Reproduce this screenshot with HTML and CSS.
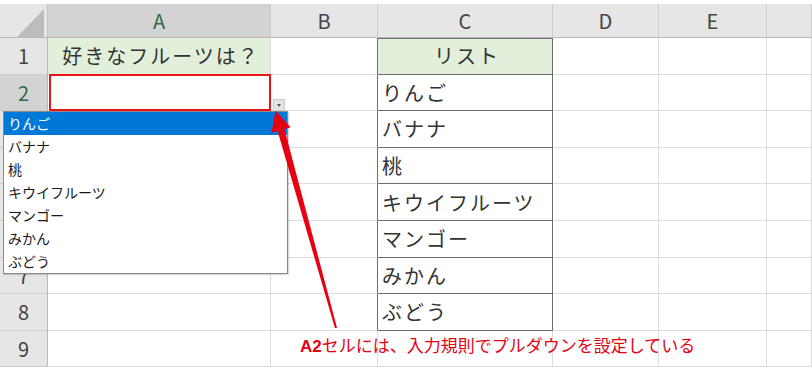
FILE: index.html
```html
<!DOCTYPE html>
<html lang="ja">
<head>
    <meta charset="UTF-8">
    <title>入力規則 プルダウン</title>
    <link rel="stylesheet" href="styles.css">
</head>
<body>
    <div class="sheet">
        <!-- header row -->
        <div class="corner"></div>
        <div class="col-head selected">A</div>
        <div class="col-head">B</div>
        <div class="col-head">C</div>
        <div class="col-head">D</div>
        <div class="col-head">E</div>
        <div class="col-head"></div>

        <div class="row-head">1</div>
        <div class="cell green center">好きなフルーツは？</div>
        <div class="cell before-list"></div>
        <div class="cell list green center first">リスト</div>
        <div class="cell"></div><div class="cell"></div><div class="cell"></div>

        <div class="row-head selected">2</div>
        <div class="cell active"></div>
        <div class="cell before-list"></div>
        <div class="cell list">りんご</div>
        <div class="cell"></div><div class="cell"></div><div class="cell"></div>

        <div class="row-head">3</div>
        <div class="cell"></div>
        <div class="cell before-list"></div>
        <div class="cell list">バナナ</div>
        <div class="cell"></div><div class="cell"></div><div class="cell"></div>

        <div class="row-head">4</div>
        <div class="cell"></div>
        <div class="cell before-list"></div>
        <div class="cell list">桃</div>
        <div class="cell"></div><div class="cell"></div><div class="cell"></div>

        <div class="row-head">5</div>
        <div class="cell"></div>
        <div class="cell before-list"></div>
        <div class="cell list">キウイフルーツ</div>
        <div class="cell"></div><div class="cell"></div><div class="cell"></div>

        <div class="row-head">6</div>
        <div class="cell"></div>
        <div class="cell before-list"></div>
        <div class="cell list">マンゴー</div>
        <div class="cell"></div><div class="cell"></div><div class="cell"></div>

        <div class="row-head">7</div>
        <div class="cell"></div>
        <div class="cell before-list"></div>
        <div class="cell list">みかん</div>
        <div class="cell"></div><div class="cell"></div><div class="cell"></div>

        <div class="row-head">8</div>
        <div class="cell"></div>
        <div class="cell before-list"></div>
        <div class="cell list">ぶどう</div>
        <div class="cell"></div><div class="cell"></div><div class="cell"></div>

        <div class="row-head">9</div>
        <div class="cell"></div>
        <div class="cell"></div>
        <div class="cell"></div>
        <div class="cell"></div><div class="cell"></div><div class="cell"></div>

        <!-- dropdown on A2 -->
        <div class="drop-button"></div>
        <ul class="dropdown">
            <li class="picked">りんご</li>
            <li>バナナ</li>
            <li>桃</li>
            <li>キウイフルーツ</li>
            <li>マンゴー</li>
            <li>みかん</li>
            <li>ぶどう</li>
        </ul>

        <!-- callout -->
        <svg class="arrow" width="812" height="364" viewBox="0 4 812 364">
            <polygon points="284.4,129.1 277.6,130.9 335,328.3 337,327.7" fill="#e60012"/>
            <polygon points="275.6,110.7 290.6,127.3 271.4,132.7" fill="#e60012"/>
        </svg>
        <div class="note"><b>A2</b>セルには、入力規則でプルダウンを設定している</div>
    </div>
</body>
</html>
```

FILE: styles.css
```css
* {
    margin: 0;
    padding: 0;
    box-sizing: border-box;
}

body {
    background-color: #fff;
    font-family: "Noto Sans CJK JP", "Noto Sans", sans-serif;
    color: #262626;
    overflow: hidden;
}

.sheet {
    position: relative;
    margin-top: 4px;
    display: grid;
    grid-template-columns: 48px 223px 107px 175px 106px 108px 45px;
    grid-template-rows: 34px repeat(9, 36.6px);
}

.corner {
    position: relative;
    background-color: #e6e6e6;
    border-right: 1px solid #c4c4c4;
    border-bottom: 1px solid #b8b8b8;
}

.corner::after {
    content: "";
    position: absolute;
    left: 17px;
    top: 5px;
    width: 27px;
    height: 28px;
    background-color: #bdbdbd;
    clip-path: polygon(100% 0, 100% 100%, 0 100%);
}

.col-head {
    background-color: #e6e6e6;
    border-right: 1px solid #cdcdcd;
    border-bottom: 1px solid #b8b8b8;
    display: flex;
    justify-content: center;
    align-items: center;
    font-size: 20px;
    color: #444;
}

.row-head {
    background-color: #e6e6e6;
    border-right: 1px solid #b8b8b8;
    border-bottom: 1px solid #cdcdcd;
    display: flex;
    justify-content: center;
    align-items: center;
    font-size: 20px;
    color: #444;
}

.col-head.selected,
.row-head.selected {
    background-color: #d3d3d3;
    color: #2f6b47;
}

.cell {
    border-right: 1px solid #dcdcdc;
    border-bottom: 1px solid #dcdcdc;
    display: flex;
    align-items: center;
    padding-left: 4px;
    font-size: 20px;
    letter-spacing: 2px;
    color: #333;
    white-space: nowrap;
}

.cell.center {
    justify-content: center;
}

.cell.green {
    background-color: #e2efda;
}

.cell.before-list {
    border-right-color: #6e6e6e;
}

.cell.list {
    border-right-color: #6e6e6e;
    border-bottom-color: #6e6e6e;
}

.cell.list.first {
    box-shadow: inset 0 1px 0 #6e6e6e;
}

.cell.active {
    border: 2px solid #e8141a;
    margin-left: 1px;
    margin-top: -1px;
}

.drop-button {
    position: absolute;
    left: 273px;
    top: 95px;
    width: 12px;
    height: 12px;
    background-color: #e4e4e4;
    border: 1px solid #cbcbcb;
}

.drop-button::after {
    content: "";
    position: absolute;
    left: 3px;
    top: 4px;
    border-left: 2.5px solid transparent;
    border-right: 2.5px solid transparent;
    border-top: 3px solid #555;
}

.dropdown {
    position: absolute;
    left: 3px;
    top: 107px;
    width: 285px;
    list-style: none;
    background-color: #fff;
    border: 1px solid #8a8a8a;
    box-shadow: 1px 1px 1px rgba(0, 0, 0, 0.15);
}

.dropdown li {
    height: 23px;
    line-height: 23px;
    padding-left: 4px;
    font-size: 14px;
    color: #1a1a1a;
}

.dropdown li.picked {
    background-color: #0078d7;
    color: #fff;
}

.arrow {
    position: absolute;
    left: 0;
    top: 0;
    pointer-events: none;
}

.note {
    position: absolute;
    left: 300px;
    top: 329px;
    font-size: 17px;
    line-height: 24px;
    color: #e60012;
    white-space: nowrap;
}

.note b {
    font-family: "Liberation Sans", sans-serif;
    font-weight: bold;
}
```
